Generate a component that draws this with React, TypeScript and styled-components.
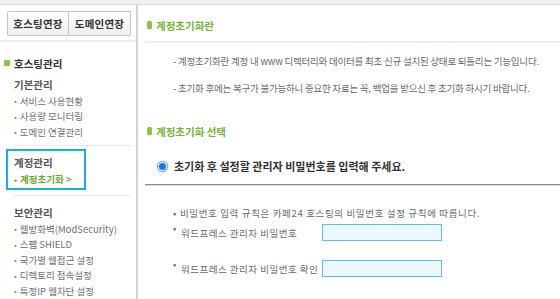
import React from "react";
import styled, { createGlobalStyle } from "styled-components";

const Global = createGlobalStyle`
  html, body { margin: 0; padding: 0; background: #fff; }
  body { width: 560px; height: 299px; overflow: hidden; font-family: "Noto Sans CJK KR", "Noto Sans", sans-serif; }
  * { box-sizing: border-box; }
`;

const Page = styled.div`
  display: flex;
  flex-direction: column;
  width: 560px;
  height: 299px;
`;

const TopBar = styled.div`
  height: 5px;
  background: #efefef;
  border-bottom: 1px solid #dcdcdc;
  flex-shrink: 0;
`;

const Body = styled.div`
  display: flex;
  flex: 1;
  min-height: 0;
`;

const Sidebar = styled.div`
  width: 138px;
  flex-shrink: 0;
  border-right: 2px solid #d2d2d2;
  display: flex;
  flex-direction: column;
`;

const ButtonRow = styled.div`
  display: flex;
  padding: 6px 0 0 7px;
  height: 37px;
  flex-shrink: 0;
  border-bottom: 2px solid #f0f0f0;
`;

const TopButton = styled.div<{ $first?: boolean }>`
  width: 62px;
  height: 25px;
  border: 1px solid #c4c4c4;
  border-left: ${(p) => (p.$first ? "1px solid #c4c4c4" : "none")};
  background: linear-gradient(#ffffff, #efefef);
  display: flex;
  align-items: center;
  justify-content: center;
  font-size: 10.5px;
  font-weight: 700;
  color: #333;
  letter-spacing: 0.2px;
  border-radius: ${(p) => (p.$first ? "2px 0 0 2px" : "0 2px 2px 0")};
`;

const GroupTitle = styled.div`
  display: flex;
  align-items: center;
  gap: 4px;
  padding: 13px 0 0 4px;
  font-size: 10.5px;
  font-weight: 700;
  color: #333;
  height: 29px;
  flex-shrink: 0;
`;

const GreenSquare = styled.span`
  width: 6px;
  height: 6px;
  background: #8cc63f;
  border-radius: 1px;
  display: inline-block;
`;

const SubTitle = styled.div<{ $top: number }>`
  font-size: 10.5px;
  font-weight: 700;
  color: #555;
  padding-left: 14px;
  margin-top: ${(p) => p.$top}px;
  height: 18px;
  flex-shrink: 0;
  display: flex;
  align-items: center;
`;

const MenuList = styled.div`
  display: flex;
  flex-direction: column;
  padding-left: 14px;
`;

const MenuItem = styled.div<{ $active?: boolean }>`
  font-size: 9.5px;
  height: 15.5px;
  flex-shrink: 0;
  display: flex;
  align-items: center;
  gap: 3px;
  color: ${(p) => (p.$active ? "#6aaa2a" : "#707070")};
  font-weight: ${(p) => (p.$active ? 700 : 400)};
  &::before {
    content: "•";
    color: ${(p) => (p.$active ? "#6aaa2a" : "#8a9a70")};
    font-size: 8px;
  }
`;

const Divider = styled.div`
  height: 1px;
  flex-shrink: 0;
  background: #e6e6e6;
  margin: 5px 6px 0 14px;
`;

const ActiveBox = styled.div`
  margin: 3px 50px 0 6px;
  border: 2px solid #1aaee8;
  padding: 3px 0 1px 6px;
  display: flex;
  flex-direction: column;
  flex-shrink: 0;
`;

const BoxTitle = styled.div`
  font-size: 10.5px;
  font-weight: 700;
  color: #555;
  height: 18px;
  display: flex;
  align-items: center;
`;

const Main = styled.div`
  flex: 1;
  display: flex;
  flex-direction: column;
  padding-left: 7px;
`;

const SectionHead = styled.div<{ $top: number }>`
  display: flex;
  align-items: center;
  gap: 4px;
  padding-left: 2px;
  margin-top: ${(p) => p.$top}px;
  height: 14px;
  flex-shrink: 0;
  font-size: 10.5px;
  font-weight: 700;
  color: #77b536;
`;

const GreenBar = styled.span`
  width: 5px;
  height: 8px;
  background: #8cc63f;
  border-radius: 1.5px;
  display: inline-block;
`;

const Rule = styled.div<{ $dark?: boolean; $top?: number }>`
  height: 2px;
  flex-shrink: 0;
  margin-top: ${(p) => p.$top ?? 0}px;
  background: ${(p) => (p.$dark ? "linear-gradient(#8a8a8a 50%, #d8d8d8 50%)" : "#efefef")};
`;

const Desc = styled.div`
  padding: 11px 0 0 28px;
  display: flex;
  flex-direction: column;
  gap: 13px;
  font-size: 9.5px;
  color: #6a6a6a;
  letter-spacing: -0.22px;
`;

const RadioRow = styled.div`
  display: flex;
  align-items: center;
  gap: 6px;
  padding: 10px 0 0 12px;
  height: 46px;
  flex-shrink: 0;
  font-size: 11px;
  font-weight: 700;
  color: #333;
  letter-spacing: 0px;
`;

const Radio = styled.span`
  width: 11px;
  height: 11px;
  border-radius: 50%;
  border: 1px solid #5aa0f0;
  background: #fff;
  display: flex;
  align-items: center;
  justify-content: center;
  box-shadow: 0 0 2px #9cc8ff;
  &::after {
    content: "";
    width: 7px;
    height: 7px;
    border-radius: 50%;
    background: #1a73f0;
  }
`;

const Form = styled.div`
  padding: 19px 0 0 28px;
  display: flex;
  flex-direction: column;
  font-size: 9.5px;
  color: #6a6a6a;
  letter-spacing: 0.5px;
`;

const Note = styled.div`
  height: 16px;
  display: flex;
  align-items: center;
  letter-spacing: 0.65px;
  &::before {
    content: "•";
    margin-right: 3px;
  }
`;

const FieldRow = styled.div<{ $top: number }>`
  display: flex;
  align-items: center;
  margin-top: ${(p) => p.$top}px;
  height: 17px;
`;

const FieldLabel = styled.div`
  width: 149px;
  position: relative;
  padding-left: 8px;
  &::before {
    content: "•";
    position: absolute;
    left: 0;
    top: -5px;
  }
`;

const Input = styled.input`
  width: 120px;
  height: 17px;
  border: 1px solid #5cc1e8;
  background: #ebf8fe;
  outline: none;
  padding: 0 3px;
`;

export default function App() {
  return (
    <Page>
      <Global />
      <TopBar />
      <Body>
        <Sidebar>
          <ButtonRow>
            <TopButton $first>호스팅연장</TopButton>
            <TopButton>도메인연장</TopButton>
          </ButtonRow>
          <GroupTitle>
            <GreenSquare />
            호스팅관리
          </GroupTitle>
          <SubTitle $top={4}>기본관리</SubTitle>
          <MenuList>
            <MenuItem>서비스 사용현황</MenuItem>
            <MenuItem>사용량 모니터링</MenuItem>
            <MenuItem>도메인 연결관리</MenuItem>
          </MenuList>
          <Divider />
          <ActiveBox>
            <BoxTitle>계정관리</BoxTitle>
            <MenuItem $active>계정초기화 &gt;</MenuItem>
          </ActiveBox>
          <Divider />
          <SubTitle $top={7}>보안관리</SubTitle>
          <MenuList>
            <MenuItem>웹방화벽(ModSecurity)</MenuItem>
            <MenuItem>스팸 SHIELD</MenuItem>
            <MenuItem>국가별 웹접근 설정</MenuItem>
            <MenuItem>디렉토리 접속설정</MenuItem>
            <MenuItem>특정IP 웹차단 설정</MenuItem>
          </MenuList>
        </Sidebar>
        <Main>
          <SectionHead $top={13}>
            <GreenBar />
            계정초기화란
          </SectionHead>
          <Rule $top={9} />
          <Desc>
            <div>- 계정초기화란 계정 내 www 디렉터리와 데이터를 최초 신규 설치된 상태로 되돌리는 기능입니다.</div>
            <div>- 초기화 후에는 복구가 불가능하니 중요한 자료는 꼭, 백업을 받으신 후 초기화 하시기 바랍니다.</div>
          </Desc>
          <SectionHead $top={29}>
            <GreenBar />
            계정초기화 선택
          </SectionHead>
          <RadioRow>
            <Radio />
            초기화 후 설정할 관리자 비밀번호를 입력해 주세요.
          </RadioRow>
          <Rule $dark />
          <Form>
            <Note>비밀번호 입력 규칙은 카페24 호스팅의 비밀번호 설정 규칙에 따릅니다.</Note>
            <FieldRow $top={3}>
              <FieldLabel>워드프레스 관리자 비밀번호</FieldLabel>
              <Input type="password" />
            </FieldRow>
            <FieldRow $top={19}>
              <FieldLabel>워드프레스 관리자 비밀번호 확인</FieldLabel>
              <Input type="password" />
            </FieldRow>
          </Form>
        </Main>
      </Body>
    </Page>
  );
}
